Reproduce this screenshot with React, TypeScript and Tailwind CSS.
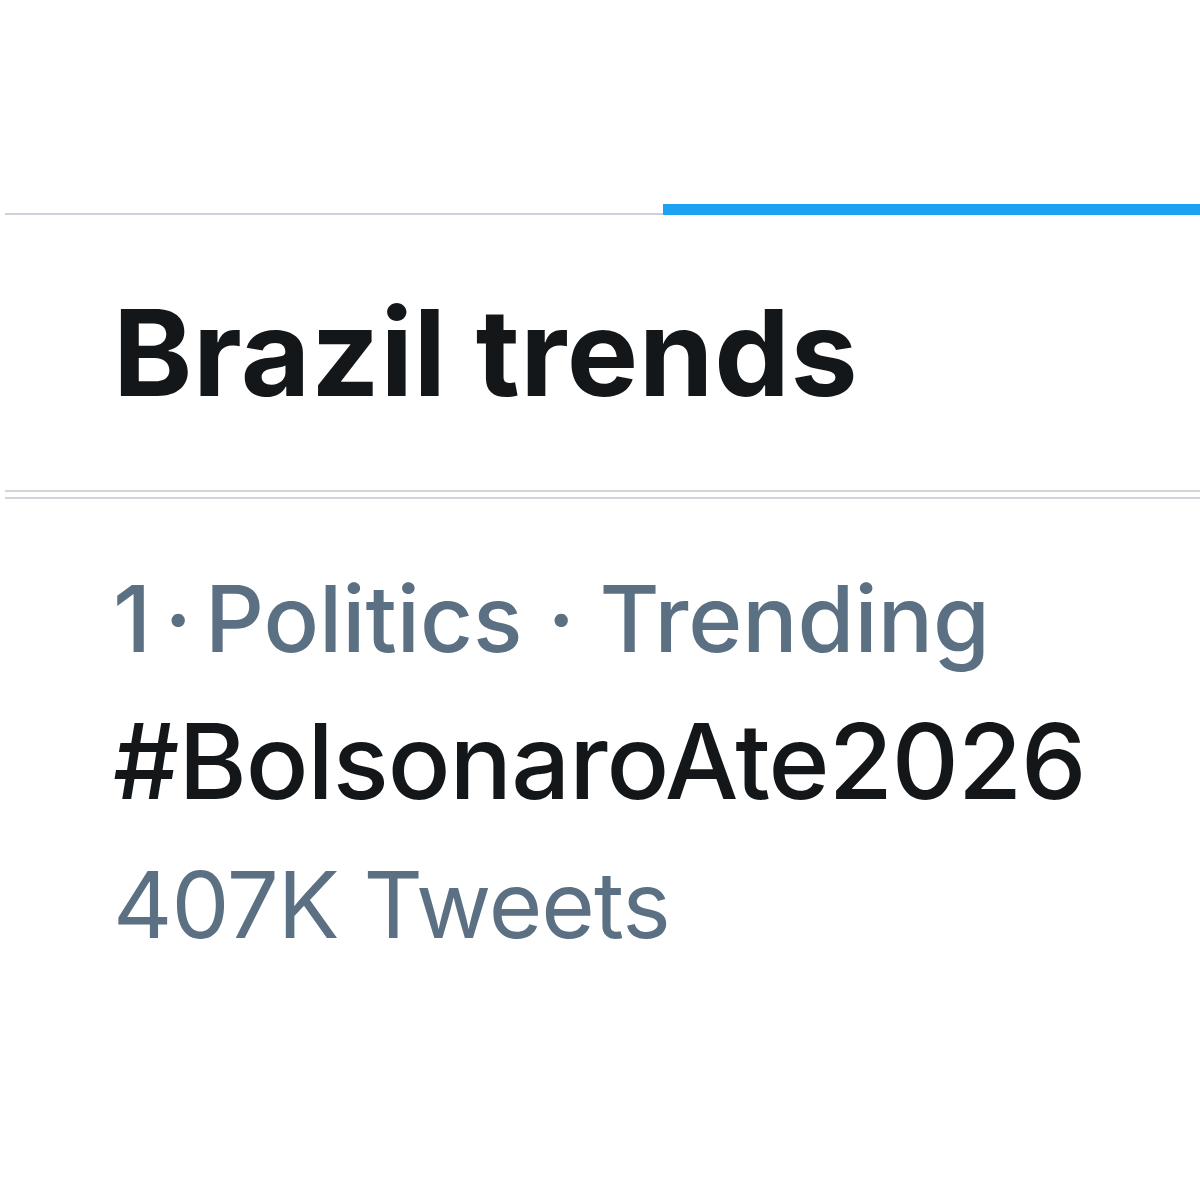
export default function App() {
  return (
    <div
      className="w-[1200px] h-[1200px] bg-white overflow-hidden"
      style={{ fontFamily: "Inter, 'Noto Sans', sans-serif" }}
    >
      <div className="h-[204px]" />
      {/* tab bar underline */}
      <div className="flex items-end pl-[5px]">
        <div className="w-[658px] h-[2px] bg-[#cfd0da]" />
        <div className="flex-1 h-[11px] bg-[#1da1f2]" />
      </div>

      <div className="pl-[113px] pt-[78px] h-[275px]">
        <h1 className="text-[120px] leading-[120px] font-bold tracking-[0.6px] text-[#14171a]">
          Brazil trends
        </h1>
      </div>

      <div className="pl-[5px]">
        <div className="h-[2px] bg-[#d3d3dc]" />
        <div className="h-[5px]" />
        <div className="h-[2px] bg-[#d3d3dc]" />
      </div>

      <div className="pl-[113px] pt-[60px]">
        <div className="flex text-[92px] leading-[120px] text-[#5b7083] font-medium whitespace-pre">
          <span>1</span>
          <span className="mx-[13px]">·</span>
          <span>Politics · Trending</span>
        </div>
        <div className="text-[104px] leading-[164px] tracking-[-1px] text-[#14171a] font-medium">
          #BolsonaroAte2026
        </div>
        <div className="text-[92px] leading-[123px] tracking-[-1px] text-[#5b7083]">
          407K Tweets
        </div>
      </div>
    </div>
  );
}
